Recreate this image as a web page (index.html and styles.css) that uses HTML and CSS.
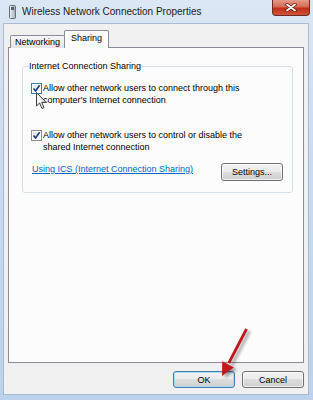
FILE: index.html
```html
<!DOCTYPE html>
<html>
<head>
    <title>Wireless Network Connection Properties</title>
    <link rel="stylesheet" href="styles.css">
</head>
<body>
    <div class="window">
        <div class="titlebar">
            <svg class="title-icon" width="9" height="14" viewBox="0 0 9 14">
                <defs>
                    <linearGradient id="card" x1="0" y1="0" x2="1" y2="0">
                        <stop offset="0" stop-color="#f4f6f8"/>
                        <stop offset="1" stop-color="#9aa5b1"/>
                    </linearGradient>
                </defs>
                <rect x="1.5" y="0.5" width="6" height="13" rx="1" fill="url(#card)" stroke="#66707b"/>
                <rect x="3" y="2" width="3" height="3" fill="#55606c"/>
                <rect x="3" y="9" width="3" height="3" fill="#c9d1da"/>
            </svg>
            <span class="title">Wireless Network Connection Properties</span>
            <div class="close">
                <svg width="12" height="9" viewBox="0 0 12 9">
                    <path d="M2 1.5 L10 7.5 M10 1.5 L2 7.5" stroke="#5a1b12" stroke-width="3.4" stroke-linecap="round"/>
                    <path d="M2 1.5 L10 7.5 M10 1.5 L2 7.5" stroke="#ffffff" stroke-width="1.8" stroke-linecap="round"/>
                </svg>
            </div>
        </div>

        <div class="client">
            <div class="tabs">
                <div class="tab">Networking</div>
                <div class="tab tab-active">Sharing</div>
            </div>

            <div class="panel">
                <fieldset class="group">
                    <legend>Internet Connection Sharing</legend>

                    <div class="check check-first">
                        <span class="box box-hot">
                            <svg width="9" height="9" viewBox="0 0 9 9"><path d="M1.5 4.5 L3.6 7 L7.6 1.2" fill="none" stroke="#1c3a86" stroke-width="1.6"/></svg>
                        </span>
                        <span>Allow other network users to connect through this<br>computer's Internet connection</span>
                    </div>

                    <div class="check check-second">
                        <span class="box">
                            <svg width="9" height="9" viewBox="0 0 9 9"><path d="M1.5 4.5 L3.6 7 L7.6 1.2" fill="none" stroke="#1c3a86" stroke-width="1.6"/></svg>
                        </span>
                        <span>Allow other network users to control or disable the<br>shared Internet connection</span>
                    </div>

                    <div class="link-row">
                        <a href="#" class="link">Using ICS (Internet Connection Sharing)</a>
                        <button class="btn btn-settings">Settings...</button>
                    </div>
                </fieldset>
            </div>

            <div class="actions">
                <button class="btn btn-default">OK</button>
                <button class="btn">Cancel</button>
            </div>
        </div>

        <!-- red arrow pointing at OK -->
        <svg class="arrow" width="313" height="400" viewBox="0 0 313 400">
            <line x1="246.5" y1="329" x2="228.8" y2="363" stroke="#c0181c" stroke-width="2.8"/>
            <polygon points="222,376 222.2,361.2 233.8,367.6" fill="#c0181c"/>
        </svg>

        <!-- mouse pointer -->
        <svg class="cursor" width="12" height="18" viewBox="0 0 12 18">
            <path d="M0.5 0.5 L0.5 14 L3.6 11 L6 16.5 L8 15.6 L5.7 10.3 L10 10.3 Z" fill="#f4f4f4" stroke="#3a3a3a" stroke-width="1"/>
        </svg>
    </div>
</body>
</html>
```

FILE: styles.css
```css
body {
    margin: 0;
    font-family: "Liberation Sans", Arial, sans-serif;
    font-size: 9px;
    color: #000;
}
.window {
    position: relative;
    width: 313px;
    height: 400px;
    box-sizing: border-box;
    display: flex;
    flex-direction: column;
    padding: 0 4px 5px 3px;
    background: linear-gradient(180deg, #dbe7f4 0%, #c9dbef 40%, #bcd2ec 100%);
}
.titlebar {
    height: 23px;
    display: flex;
    align-items: center;
    padding-left: 5px;
}
.title-icon {
    margin-right: 5px;
}
.title {
    font-size: 10px;
    color: #1b1b1b;
}
.close {
    margin-left: auto;
    margin-right: -1px;
    align-self: flex-start;
    width: 38px;
    height: 16px;
    box-sizing: border-box;
    border: 1px solid #6e2a20;
    border-top: none;
    border-radius: 0 0 4px 4px;
    background: linear-gradient(180deg, #e59a8a 0%, #d66a55 45%, #bf2f17 55%, #d0553a 100%);
    display: flex;
    align-items: center;
    justify-content: center;
}
.client {
    flex: 1;
    background: #f0f0f0;
    border: 1px solid #a9bbd0;
    padding: 7px 4px 0 4px;
}
.tabs {
    position: relative;
    z-index: 1;
    display: flex;
    align-items: flex-end;
    height: 17px;
    margin-bottom: -1px;
    padding-left: 2px;
}
.tab {
    height: 12px;
    line-height: 13px;
    padding: 0 4px;
    border: 1px solid #898c95;
    border-bottom: none;
    border-radius: 2px 2px 0 0;
    background: linear-gradient(180deg, #f6f6f6 0%, #e4e4e4 100%);
}
.tab-active {
    height: 17px;
    line-height: 14px;
    margin-left: -1px;
    padding: 0 6px;
    background: #fcfcfc;
}
.panel {
    height: 316px;
    box-sizing: border-box;
    border: 1px solid #898c95;
    background: #fcfcfc;
    padding: 12px 10px 0 13px;
}
.group {
    margin: 0;
    padding: 0 9px 11px 5px;
    border: 1px solid #d5dfe5;
    border-radius: 3px;
}
.group legend {
    padding: 0 1px;
    line-height: 12px;
}
.check {
    display: flex;
    align-items: flex-start;
    line-height: 12px;
    margin-left: 3px;
}
.check-first { margin-top: 10px; }
.check-second { margin-top: 23px; }
.box {
    width: 11px;
    height: 11px;
    box-sizing: border-box;
    margin: 1px 1px 0 0;
    border: 1px solid #8f8f8f;
    background: linear-gradient(135deg, #dcdcdc 0%, #fafafa 100%);
    box-shadow: inset 0 0 0 1px #fff;
    display: flex;
    align-items: center;
    justify-content: center;
    flex-shrink: 0;
}
.box-hot {
    border-color: #3c7fb1;
    background: linear-gradient(135deg, #cfeafa 0%, #f4fbff 100%);
}
.link-row {
    display: flex;
    justify-content: space-between;
    align-items: flex-start;
    margin-top: 10px;
}
.link {
    margin-left: 4px;
    line-height: 12px;
    color: #0066cc;
}
.btn {
    width: 62px;
    height: 17px;
    box-sizing: border-box;
    padding: 0;
    font: inherit;
    color: #000;
    border: 1px solid #707070;
    border-radius: 3px;
    background: linear-gradient(180deg, #f2f2f2 0%, #ebebeb 49%, #dddddd 50%, #cfcfcf 100%);
    box-shadow: inset 0 0 0 1px rgba(255,255,255,0.7);
}
.btn-settings {
    height: 18px;
}
.btn-default {
    border-color: #3c7fb1;
    box-shadow: inset 0 0 0 1px #a6daf5;
}
.actions {
    display: flex;
    justify-content: flex-end;
    gap: 7px;
    margin-top: 8px;
}
.arrow {
    position: absolute;
    left: 0;
    top: 0;
    pointer-events: none;
    filter: drop-shadow(3px 2px 1.5px rgba(0,0,0,0.35));
}
.cursor {
    position: absolute;
    left: 36px;
    top: 92px;
    pointer-events: none;
}
```
